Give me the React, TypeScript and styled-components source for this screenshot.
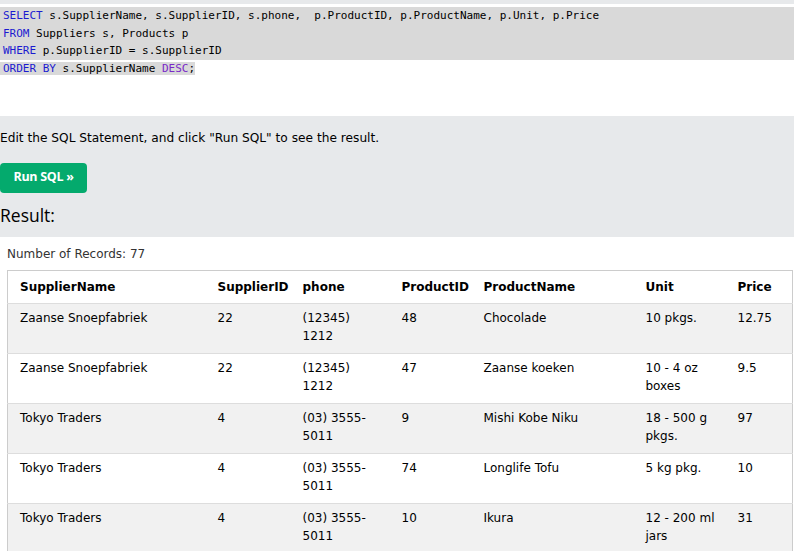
import React from "react";
import styled, { createGlobalStyle } from "styled-components";

const GlobalStyle = createGlobalStyle`
  body {
    margin: 0;
    background: #fff;
    font-family: "DejaVu Sans", Verdana, sans-serif;
  }
`;

const TopStrip = styled.div`
  height: 4px;
  background: #e7e9eb;
`;

const Editor = styled.div`
  height: 109px;
  padding-top: 3px;
  background: #fff;
  font-family: "DejaVu Sans Mono", Consolas, monospace;
  font-size: 11px;
  line-height: 17.7px;
  color: #000;
`;

const CodeLine = styled.div<{ $selected?: boolean }>`
  padding-left: 3px;
  white-space: pre;
  background: ${({ $selected }) => ($selected ? "#d9d9d9" : "transparent")};
`;

const SelectedTail = styled.span`
  background: #d9d9d9;
  margin-left: -3px;
  padding-left: 3px;
`;

const Kw = styled.span<{ $purple?: boolean }>`
  color: ${({ $purple }) => ($purple ? "#7a28c8" : "#1b1bd0")};
`;

const Panel = styled.div`
  background: #e7e9eb;
  padding: 14px 0 10px;
`;

const Hint = styled.p`
  margin: 0 0 16px;
  font-size: 12.2px;
  line-height: 17px;
  color: #000;
`;

const RunButton = styled.button`
  display: block;
  width: 87px;
  height: 30px;
  border: none;
  border-radius: 4px;
  background: #04aa6d;
  color: #fff;
  font-family: "Open Sans", "Segoe UI", sans-serif;
  font-weight: 700;
  font-size: 12.5px;
  line-height: 28px;
  letter-spacing: -0.3px;
  padding: 0 0 2px;
  cursor: pointer;
`;

const ResultTitle = styled.h2`
  margin: 10px 0 0;
  font-family: "Open Sans", "Segoe UI", sans-serif;
  font-weight: 400;
  font-size: 17.5px;
  line-height: 24px;
  color: #000;
`;

const ResultArea = styled.div`
  padding: 9px 1px 0 7px;
`;

const RecordCount = styled.div`
  font-size: 12px;
  line-height: 16px;
  color: #333;
  margin-bottom: 8px;
`;

const Table = styled.table`
  width: 100%;
  border-collapse: collapse;
  table-layout: fixed;
  border: 1px solid #ccc;
  font-size: 12px;
  color: #000;
`;

const HeadCell = styled.th`
  text-align: left;
  font-weight: 700;
  padding: 7px 6px 7px 12px;
  line-height: 18px;
  border-bottom: 1px solid #ddd;
`;

const Row = styled.tr<{ $striped: boolean }>`
  background: ${({ $striped }) => ($striped ? "#f1f1f1" : "#fff")};
  border-bottom: 1px solid #ddd;
`;

const Cell = styled.td`
  vertical-align: top;
  padding: 5px 6px 8px 12px;
  line-height: 18px;
  height: 36px;
`;

const columns = [
  { name: "SupplierName", width: 198 },
  { name: "SupplierID", width: 85 },
  { name: "phone", width: 99 },
  { name: "ProductID", width: 82 },
  { name: "ProductName", width: 162 },
  { name: "Unit", width: 92 },
  { name: "Price", width: 67 },
];

const rows = [
  ["Zaanse Snoepfabriek", "22", "(12345) 1212", "48", "Chocolade", "10 pkgs.", "12.75"],
  ["Zaanse Snoepfabriek", "22", "(12345) 1212", "47", "Zaanse koeken", "10 - 4 oz boxes", "9.5"],
  ["Tokyo Traders", "4", "(03) 3555-5011", "9", "Mishi Kobe Niku", "18 - 500 g pkgs.", "97"],
  ["Tokyo Traders", "4", "(03) 3555-5011", "74", "Longlife Tofu", "5 kg pkg.", "10"],
  ["Tokyo Traders", "4", "(03) 3555-5011", "10", "Ikura", "12 - 200 ml jars", "31"],
];

export default function App() {
  return (
    <>
      <GlobalStyle />
      <TopStrip />
      <Editor>
        <CodeLine $selected>
          <Kw>SELECT</Kw> s.SupplierName, s.SupplierID, s.phone,  p.ProductID, p.ProductName, p.Unit, p.Price
        </CodeLine>
        <CodeLine $selected>
          <Kw>FROM</Kw> Suppliers s, Products p
        </CodeLine>
        <CodeLine $selected>
          <Kw>WHERE</Kw> p.SupplierID = s.SupplierID
        </CodeLine>
        <CodeLine>
          <SelectedTail>
            <Kw>ORDER BY</Kw> s.SupplierName <Kw $purple>DESC</Kw>;
          </SelectedTail>
        </CodeLine>
      </Editor>
      <Panel>
        <Hint>Edit the SQL Statement, and click "Run SQL" to see the result.</Hint>
        <RunButton>Run SQL »</RunButton>
        <ResultTitle>Result:</ResultTitle>
      </Panel>
      <ResultArea>
        <RecordCount>Number of Records: 77</RecordCount>
        <Table>
          <colgroup>
            {columns.map((c) => (
              <col key={c.name} style={{ width: c.width }} />
            ))}
          </colgroup>
          <thead>
            <tr>
              {columns.map((c) => (
                <HeadCell key={c.name}>{c.name}</HeadCell>
              ))}
            </tr>
          </thead>
          <tbody>
            {rows.map((r, i) => (
              <Row key={i} $striped={i % 2 === 0}>
                {r.map((v, j) => (
                  <Cell key={j}>{v}</Cell>
                ))}
              </Row>
            ))}
          </tbody>
        </Table>
      </ResultArea>
    </>
  );
}
